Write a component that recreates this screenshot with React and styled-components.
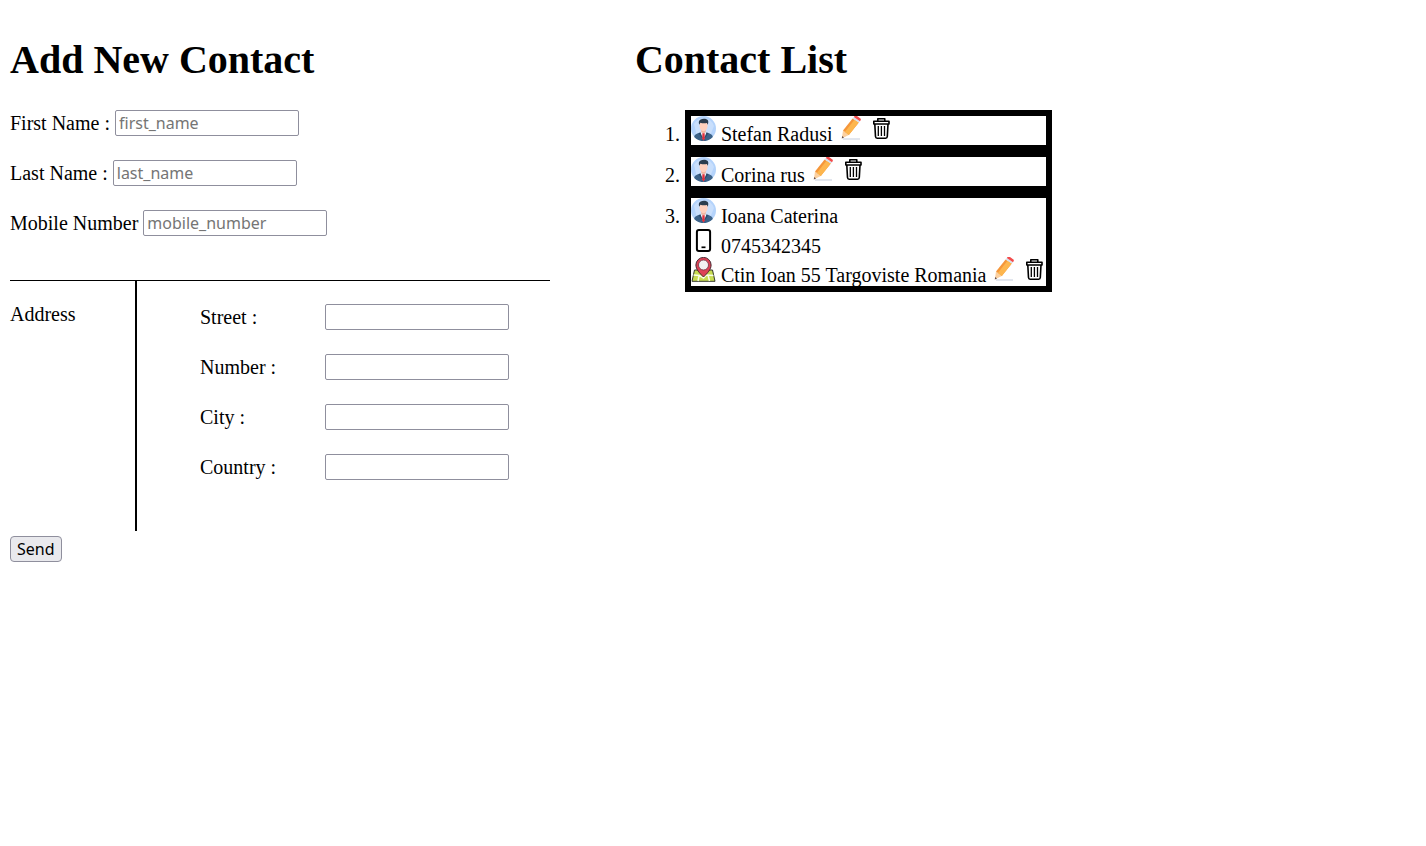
import React from "react";
import styled, { createGlobalStyle } from "styled-components";

const GlobalStyle = createGlobalStyle`
  body {
    margin: 0;
    background: #fff;
    color: #000;
    font: 20px/23px "Liberation Serif", "Times New Roman", serif;
  }
`;

const Page = styled.div`
  display: grid;
  grid-template-columns: 4fr 5fr;
  padding: 0 10px;
`;

const Title = styled.h1`
  margin: 37px 0 27px;
  font-size: 40px;
  line-height: 46px;
`;

const FieldStack = styled.div`
  display: flex;
  flex-direction: column;
  gap: 24px;
`;

const Field = styled.div`
  display: flex;
  align-items: center;
  gap: 5px;
  height: 26px;
`;

const FieldLabel = styled.label`
  width: ${(p) => (p.$wide ? "120px" : "auto")};
`;

const TextInput = styled.input`
  box-sizing: border-box;
  width: 184px;
  height: 26px;
  padding: 1px 3px;
  border: 1px solid #8f8f9d;
  border-radius: 2px;
  background: #fff;
  font: 16px/22px "Noto Sans", sans-serif;

  &::placeholder {
    color: #757575;
    opacity: 1;
  }
`;

const AddressSection = styled.section`
  display: grid;
  grid-template-columns: 125px 1fr;
  max-width: 540px;
  height: 250px;
  margin-top: 44px;
  border-top: 1px solid #000;
`;

const AddressTitle = styled.div`
  padding-top: 22px;
`;

const AddressFields = styled.div`
  padding: 23px 0 0 63px;
  border-left: 2px solid #000;
`;

const SendButton = styled.button`
  height: 26px;
  margin-top: 5px;
  padding: 0 6px;
  border: 1px solid #8f8f9d;
  border-radius: 4px;
  background: #e9e9ed;
  color: #000;
  font: 16px/22px "Noto Sans", sans-serif;
`;

const Contacts = styled.ol`
  width: fit-content;
  margin: 0;
  padding-left: 50px;
`;

const Contact = styled.li`
  border: 6px solid #000;
`;

const Line = styled.div`
  display: flex;
  align-items: baseline;
  gap: 5px;
  height: ${(p) => (p.$lead ? "30px" : "29px")};
  white-space: nowrap;
`;

const Icon = styled.svg`
  display: block;
  flex: none;
  width: 25px;
  height: 25px;
`;

const IconButton = styled.button`
  flex: none;
  padding: 0;
  border: 0;
  background: none;
  cursor: pointer;
`;

const PersonIcon = () => (
  <Icon viewBox="0 0 25 25" aria-hidden="true">
    <circle cx="12.5" cy="12.5" r="12.5" fill="#b4d3fb" />
    <path d="M3 8A11 11 0 0 1 23 10L19 20L6 20Z" fill="#c9dffc" />
    <path d="M3.200 21c.4-2.600 2.300-3.500 6.500-4.500h5.600c4.200 1 6.100 1.900 6.500 4.500a12.500 12.500 0 0 1-18.600 0Z" fill="#3c6288" />
    <path d="M9 16.300 12.500 24.500 16 16.300Z" fill="#f6f8fc" />
    <path d="m11.400 17.300 1.100-.7 1.100.7.3 5-1.400 2.500-1.400-2.500Z" fill="#e02f3d" />
    <path d="M10.200 12h4.600v4l-2.300 1.600-2.300-1.600Z" fill="#f2b49f" />
    <path d="M8.600 6.500h7.900v3.800c0 2.900-2.100 4.900-4 4.900s-3.900-2-3.900-4.900Z" fill="#ffd0bd" />
    <path d="M8.200 8.800C7.300 6 8 4 9.700 3.500c2-1.100 6.500-.9 7.300 1 .5 1.300.3 2.700-.3 4.300l-.8-1.900c-2 .5-4.800.4-6.500-.2Z" fill="#2b3d4e" />
    <path d="m9.500 16.200-1.700 1.300 2.800 4 1 .5Z" fill="#2a4b6b" />
    <path d="m15.500 16.200 1.700 1.300-2.800 4-1 .5Z" fill="#2a4b6b" />
  </Icon>
);

const PhoneIcon = () => (
  <Icon viewBox="0 0 25 25" aria-hidden="true">
    <rect x="5.900" y="1.900" width="13.200" height="21" rx="2" fill="#fff" stroke="#000" strokeWidth="2" />
    <path d="M10.500 19.300h4" stroke="#000" strokeWidth="1.700" />
  </Icon>
);

const MapIcon = () => (
  <Icon viewBox="0 0 25 25" aria-hidden="true">
    <path d="M3.500 13h18l2.500 11.300H1Z" fill="#c8dc52" stroke="#34382e" />
    <path d="m2.500 18 6 .5 4 2.500 3-3 7 .5M8 19l-1 5M17 18l1.500 6" fill="none" stroke="#f8ffe5" strokeWidth="1.500" />
    <path d="M12.500 20C8.500 16 4.900 12.500 4.900 8a7.600 7.600 0 0 1 15.200 0c0 4.500-3.600 8-7.600 12Z" fill="#dd4256" stroke="#492a32" />
    <circle cx="12.500" cy="8" r="5" fill="#f2f2f2" stroke="#713542" strokeWidth=".8" />
  </Icon>
);

const PencilIcon = () => (
  <Icon viewBox="0 0 25 25" aria-hidden="true">
    <path d="M5 23h17" stroke="#d3d9e5" strokeWidth="1.300" />
    <path d="m3.800 22.500 1.200-8 5.800 4.500Z" fill="#fbd0a0" />
    <path d="m3.800 22.500.4-2.500 1.800 1.400Z" fill="#5f4c4c" />
    <path d="M5 14.500 14.600 2.400l6.200 4.200L10.800 19Z" fill="#f5963a" />
    <path d="m6.800 15.900 9.700-12.200 4.300 2.900L10.800 19Z" fill="#fdb64e" />
    <path d="m14.600 2.400 1.200-1.500 6.200 4.300-1.200 1.400Z" fill="#d5e1ed" />
    <path d="m15.800.9.5-.6c.3-.3.700-.3 1.200-.3H19l3.400 2.400c.6.400.6 1 .3 1.500l-.7 1.300Z" fill="#f34b4b" />
  </Icon>
);

const TrashIcon = () => (
  <Icon viewBox="0 0 25 25" aria-hidden="true">
    <g fill="none" stroke="#000" strokeWidth="1.600">
      <path d="M9.800 5V2.800h7V5M5.800 5.300h15.200v2.700H5.800Z" strokeLinejoin="round" />
      <path d="M6.800 8 7.500 20.500c.1 1.200.5 1.700 1.600 1.700h8.600c1.100 0 1.500-.5 1.600-1.700L20 8" />
      <path d="M10.300 10v10M13.400 10v10M16.500 10v10" strokeWidth="1.300" />
    </g>
  </Icon>
);

const personal = [
  { id: "first_name", label: "First Name :" },
  { id: "last_name", label: "Last Name :" },
  { id: "mobile_number", label: "Mobile Number" },
];

const address = [
  { id: "street", label: "Street :" },
  { id: "number", label: "Number :" },
  { id: "city", label: "City :" },
  { id: "country", label: "Country :" },
];

const contacts = [
  { name: "Stefan Radusi" },
  { name: "Corina rus" },
  { name: "Ioana Caterina", phone: "0745342345", address: "Ctin Ioan 55 Targoviste Romania" },
];

const Actions = ({ name }) => (
  <>
    <IconButton type="button" aria-label={`Edit ${name}`}><PencilIcon /></IconButton>
    <IconButton type="button" aria-label={`Delete ${name}`}><TrashIcon /></IconButton>
  </>
);

export default function App() {
  return (
    <>
      <GlobalStyle />
      <Page>
        <form onSubmit={(e) => e.preventDefault()}>
          <Title>Add New Contact</Title>
          <FieldStack>
            {personal.map((f) => (
              <Field key={f.id}>
                <FieldLabel htmlFor={f.id}>{f.label}</FieldLabel>
                <TextInput id={f.id} placeholder={f.id} />
              </Field>
            ))}
          </FieldStack>
          <AddressSection>
            <AddressTitle>Address</AddressTitle>
            <AddressFields>
              <FieldStack>
                {address.map((f) => (
                  <Field key={f.id}>
                    <FieldLabel $wide htmlFor={f.id}>{f.label}</FieldLabel>
                    <TextInput id={f.id} />
                  </Field>
                ))}
              </FieldStack>
            </AddressFields>
          </AddressSection>
          <SendButton type="submit">Send</SendButton>
        </form>
        <section>
          <Title>Contact List</Title>
          <Contacts>
            {contacts.map((c) => (
              <Contact key={c.name}>
                <Line $lead={Boolean(c.address)}>
                  <PersonIcon />
                  <span>{c.name}</span>
                  {!c.address && <Actions name={c.name} />}
                </Line>
                {c.phone && (
                  <Line>
                    <PhoneIcon />
                    <span>{c.phone}</span>
                  </Line>
                )}
                {c.address && (
                  <Line>
                    <MapIcon />
                    <span>{c.address}</span>
                    <Actions name={c.name} />
                  </Line>
                )}
              </Contact>
            ))}
          </Contacts>
        </section>
      </Page>
    </>
  );
}
